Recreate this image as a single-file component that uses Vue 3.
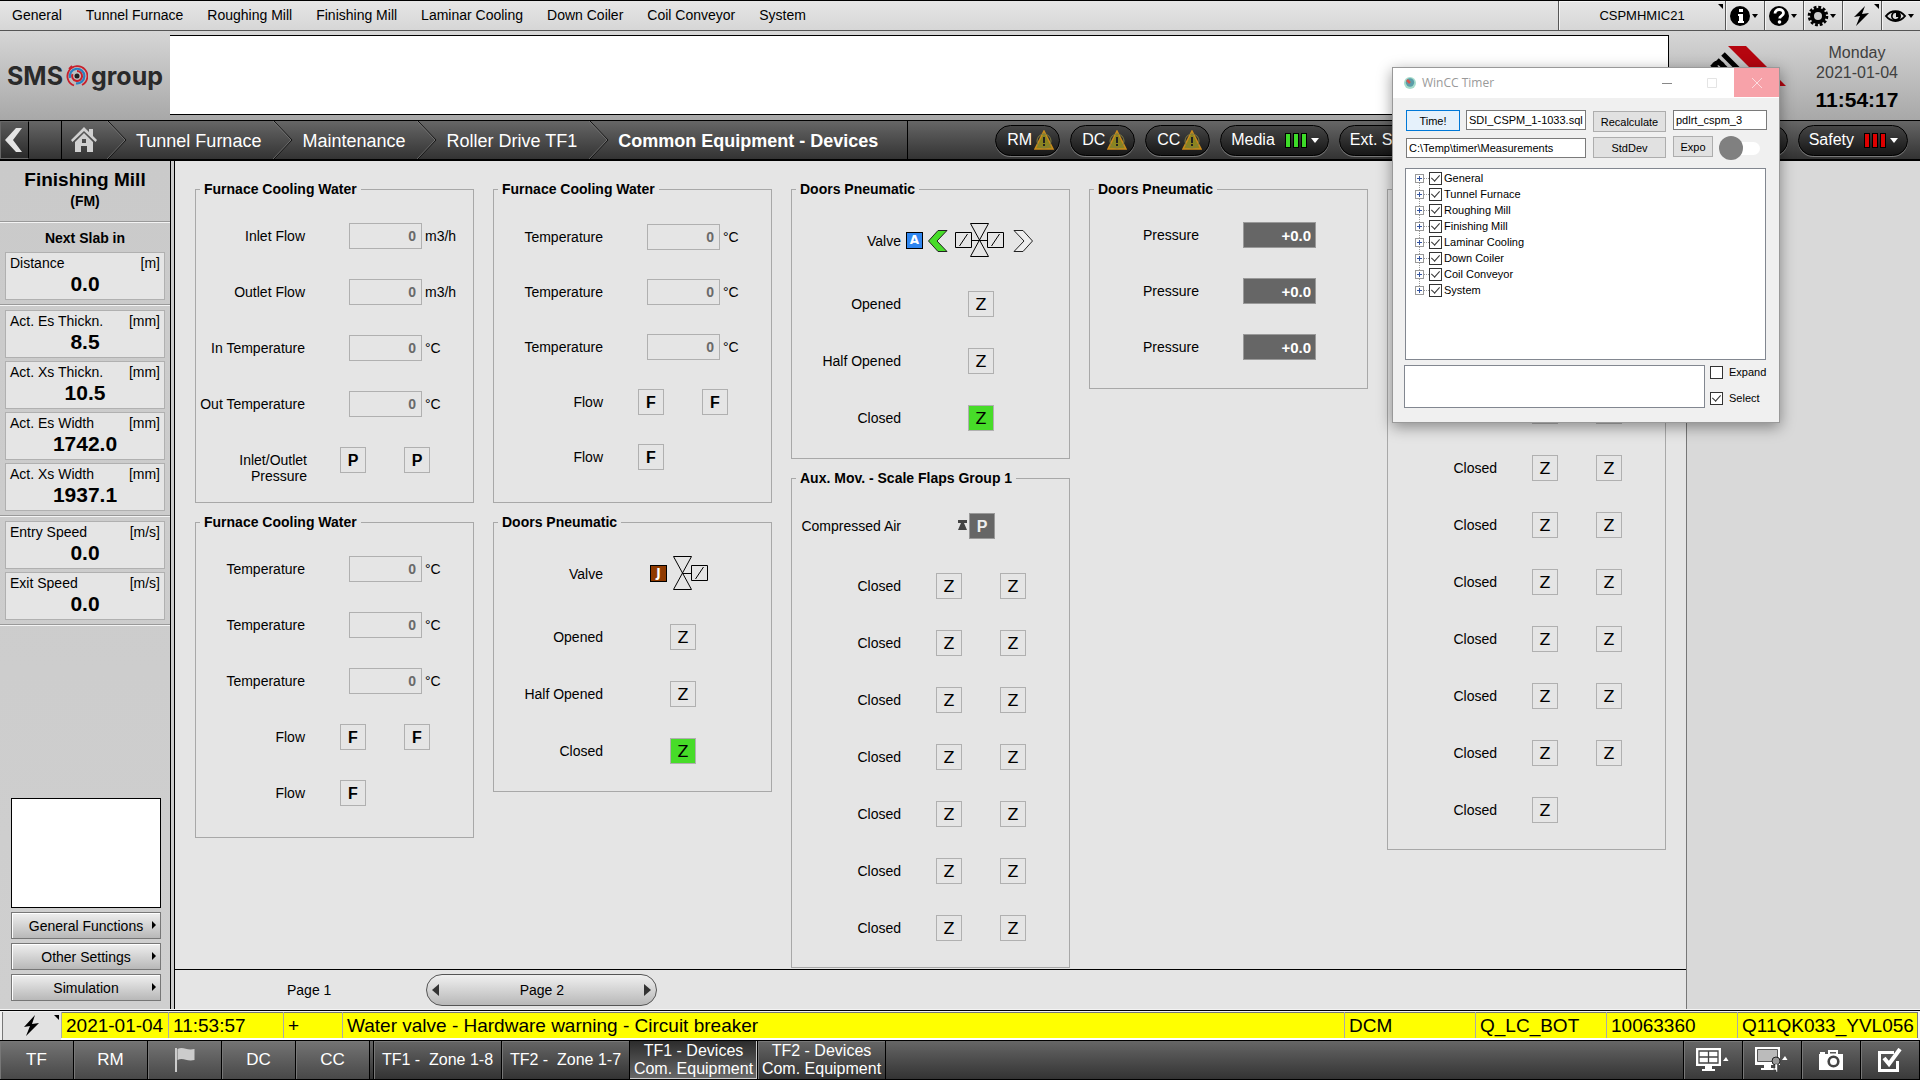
<script setup>
import { ref } from 'vue'

const menu = ['General', 'Tunnel Furnace', 'Roughing Mill', 'Finishing Mill', 'Laminar Cooling', 'Down Coiler', 'Coil Conveyor', 'System']
const crumbs = ['Tunnel Furnace', 'Maintenance', 'Roller Drive TF1']
const warnings = ['RM', 'DC', 'CC']

const metrics = [
  [{ label: 'Distance', unit: '[m]', value: '0.0' }],
  [
    { label: 'Act. Es Thickn.', unit: '[mm]', value: '8.5' },
    { label: 'Act. Xs Thickn.', unit: '[mm]', value: '10.5' },
    { label: 'Act. Es Width', unit: '[mm]', value: '1742.0' },
    { label: 'Act. Xs Width', unit: '[mm]', value: '1937.1' },
  ],
  [
    { label: 'Entry Speed', unit: '[m/s]', value: '0.0' },
    { label: 'Exit Speed', unit: '[m/s]', value: '0.0' },
  ],
]
const functions = ['General Functions', 'Other Settings', 'Simulation']

const field = (label, unit) => ({ kind: 'field', label, unit, value: '0' })
const lamps = (label, ...letters) => ({ kind: 'lamps', label, letters })
const lamp = (label, letter, tone = '') => ({ kind: 'lamp', label, letter, tone })
const flaps = (n) => Array.from({ length: n }, () => lamps('Closed', 'Z', 'Z'))

const columns = [
  [
    {
      title: 'Furnace Cooling Water', type: 'inlet',
      rows: [
        field('Inlet Flow', 'm3/h'), field('Outlet Flow', 'm3/h'),
        field('In Temperature', '°C'), field('Out Temperature', '°C'),
        lamps('Inlet/Outlet Pressure', 'P', 'P'),
      ],
    },
    {
      title: 'Furnace Cooling Water', type: 'return',
      rows: [
        field('Temperature', '°C'), field('Temperature', '°C'), field('Temperature', '°C'),
        lamps('Flow', 'F', 'F'), lamps('Flow', 'F'),
      ],
    },
  ],
  [
    {
      title: 'Furnace Cooling Water', type: 'compact',
      rows: [
        field('Temperature', '°C'), field('Temperature', '°C'), field('Temperature', '°C'),
        lamps('Flow', 'F', 'F'), lamps('Flow', 'F'),
      ],
    },
    {
      title: 'Doors Pneumatic', type: 'door',
      rows: [
        { kind: 'valve-single', label: 'Valve' },
        lamp('Opened', 'Z'), lamp('Half Opened', 'Z'), lamp('Closed', 'Z', 'on'),
      ],
    },
  ],
  [
    {
      title: 'Doors Pneumatic', type: 'door',
      rows: [
        { kind: 'valve-double', label: 'Valve' },
        lamp('Opened', 'Z'), lamp('Half Opened', 'Z'), lamp('Closed', 'Z', 'on'),
      ],
    },
    {
      title: 'Aux. Mov. - Scale Flaps Group 1', type: 'flaps',
      rows: [{ kind: 'air', label: 'Compressed Air' }, ...flaps(7)],
    },
  ],
  [
    {
      title: 'Doors Pneumatic', type: 'pressure',
      rows: ['+0.0', '+0.0', '+0.0'].map((value) => ({ kind: 'reading', label: 'Pressure', value })),
    },
  ],
  [{ title: '', type: 'long', rows: [...flaps(7), lamps('Closed', 'Z')] }],
]

const areas = ['TF', 'RM', 'flag', 'DC', 'CC']
const tree = ref(menu.map((name) => ({ name, checked: true })))
const expand = ref(false)
const select = ref(true)
</script>

<template>
  <div class="hmi">
    <header class="menubar">
      <nav class="menu">
        <a v-for="m in menu" :key="m" href="#">{{ m }}</a>
      </nav>
      <button class="station">CSPMHMIC21<i class="corner"></i></button>
      <button class="tool" aria-label="Information">
        <svg width="36" height="28" viewBox="0 0 36 28"><circle cx="14" cy="14" r="10" /><path d="M13 7h4v3h-4zM12 12h5v7h1v2h-6v-2h1v-5h-1z" fill="#fff" /><path d="M26 12h6l-3 4z" /></svg>
      </button>
      <button class="tool" aria-label="Help">
        <svg width="36" height="28" viewBox="0 0 36 28"><circle cx="14" cy="14" r="10" /><path d="M10 11.500c0-5.500 8.500-5 8.500-.5 0 3-3.800 2.800-3.800 5.500" fill="none" stroke="#fff" stroke-width="2.800" /><circle cx="14.500" cy="20" r="1.800" fill="#fff" /><path d="M26 12h6l-3 4z" /></svg>
      </button>
      <button class="tool" aria-label="Settings">
        <svg width="36" height="28" viewBox="0 0 36 28"><circle cx="14" cy="14" r="6" fill="#ccc" stroke="#000" stroke-width="4" /><circle cx="14" cy="14" r="8.800" fill="none" stroke="#000" stroke-width="3" stroke-dasharray="2.800 1.808" /><path d="M26 12h6l-3 4z" /></svg>
      </button>
      <button class="tool" aria-label="Alarms">
        <svg width="36" height="28" viewBox="0 0 36 28"><path d="M22 4L11 15l6-1-4 10 13-13-7 1z" /></svg><i class="corner"></i>
      </button>
      <button class="tool" aria-label="View">
        <svg width="36" height="28" viewBox="0 0 36 28"><path d="M4 14c5-6.500 14-6.500 19 0-5 6.500-14 6.500-19 0z" fill="none" stroke="#000" stroke-width="2" /><circle cx="14" cy="14" r="5" /><path d="M14 11a3 3 0 1 0 2.500 4h-2.500z" fill="#ddd" /><path d="M26 12h6l-3 4z" /></svg>
      </button>
    </header>

    <section class="banner">
      <div class="brand">
        <span>SMS</span>
        <svg width="22" height="24" viewBox="0 0 22 24" fill="none"><circle cx="11" cy="12" r="2.500" fill="#222" /><path d="M11 7a5 5 0 1 1-4.500 3" stroke="#c8202c" stroke-width="2" /><path d="M4 14a7.300 7.300 0 1 1 6 5.300" stroke="#2b7fc0" stroke-width="2.200" /><path d="M8 21.500A10 10 0 1 1 16 21M3 5l3-3" stroke="#c8202c" stroke-width="1.800" /></svg>
        <span>group</span>
      </div>
      <div class="message"></div>
      <svg class="plant" width="125" height="89" viewBox="0 0 125 89">
        <path d="M59 15h18l40 40H99z" fill="#b5050f" />
        <path d="M54 23l18 18M48 29l18 18M54 35q-4-6-9-1M43 33l14 14" fill="none" stroke="#000" stroke-width="5" />
      </svg>
      <div class="clock">
        <span>Monday</span>
        <span>2021-01-04</span>
        <strong>11:54:17</strong>
      </div>
    </section>

    <nav class="path">
      <button class="back" aria-label="Back">
        <svg width="26" height="36" viewBox="0 0 26 36"><path d="M15 6h6l-9 12 9 12h-6L4 18z" fill="#e4e4e4" /></svg>
      </button>
      <span class="spacer"></span>
      <a class="home" href="#" aria-label="Home">
        <svg width="26" height="26" viewBox="0 0 26 26" fill="#d0d0d0"><path d="M13 0l5 5V2h4v7l4 4-1.500 2L13 4 1.500 15 0 13z" /><path d="M13 6l9 9v10h-6v-6h-6v6H4V15zM11 12v4h4v-4z" fill-rule="evenodd" /></svg>
      </a>
      <template v-for="c in crumbs" :key="c">
        <svg class="sep" width="20" height="38" viewBox="0 0 20 38" fill="none"><path d="M1 0l18 19L1 38" stroke="#111" /><path d="M0 0l18 19L0 38" stroke="#888" stroke-opacity=".6" /></svg>
        <a href="#">{{ c }}</a>
      </template>
      <svg class="sep" width="20" height="38" viewBox="0 0 20 38" fill="none"><path d="M1 0l18 19L1 38" stroke="#111" /><path d="M0 0l18 19L0 38" stroke="#888" stroke-opacity=".6" /></svg>
      <a class="current" href="#">Common Equipment - Devices</a>
      <div class="pills">
        <button v-for="w in warnings" :key="w" class="pill warn">
          {{ w }}
          <svg width="20" height="20" viewBox="0 0 20 20"><path d="M10 1l9 18H1z" fill="#8a8420" stroke="#c98a1c" stroke-width="1.500" /><circle cx="10" cy="11" r="7" fill="none" stroke="#807c40" /><path d="M9 7h2v6H9zM9 14h2v2H9z" fill="#222" /></svg>
        </button>
        <button class="pill">Media <span class="bars ok"><i></i><i></i><i></i></span><b class="down"></b></button>
        <button class="pill wide">Ext. Systems</button>
        <button class="pill">Safety <span class="bars bad"><i></i><i></i><i></i></span><b class="down"></b></button>
      </div>
    </nav>

    <div class="body">
      <aside class="side">
        <div class="side-title">
          <h1>Finishing Mill</h1>
          <p>(FM)</p>
        </div>
        <h2>Next Slab in</h2>
        <div v-for="(set, i) in metrics" :key="i" class="set">
          <div v-for="m in set" :key="m.label" class="metric">
            <div class="metric-head"><span>{{ m.label }}</span><span>{{ m.unit }}</span></div>
            <strong>{{ m.value }}</strong>
          </div>
        </div>
        <div class="side-foot">
          <div class="preview"></div>
          <button v-for="f in functions" :key="f" class="func">{{ f }}<i></i></button>
        </div>
      </aside>
      <div class="rail"></div>

      <main class="content">
        <div class="columns">
          <div v-for="(col, ci) in columns" :key="ci" class="column">
            <fieldset v-for="(g, gi) in col" :key="gi" class="group" :class="'group-' + g.type">
              <legend>{{ g.title }}</legend>
              <div v-for="(r, ri) in g.rows" :key="ri" class="row">
                <template v-if="r.kind === 'field' || r.kind === 'reading'">
                  <label class="name" :for="`f${ci}${gi}${ri}`">{{ r.label }}</label>
                  <input :id="`f${ci}${gi}${ri}`" class="value" :class="r.kind" :value="r.value" readonly />
                  <span class="unit">{{ r.unit }}</span>
                </template>
                <template v-else-if="r.kind === 'lamps'">
                  <span class="name" :class="{ double: r.label.includes('/') }">{{ r.label }}</span>
                  <div class="pair"><span v-for="(l, li) in r.letters" :key="li" class="lamp" :class="{ z: l === 'Z' }">{{ l }}</span></div>
                </template>
                <template v-else-if="r.kind === 'lamp'">
                  <span class="name">{{ r.label }}</span>
                  <span class="lamp z single" :class="r.tone">{{ r.letter }}</span>
                </template>
                <template v-else-if="r.kind === 'air'">
                  <span class="name">{{ r.label }}</span>
                  <svg class="limit" width="9" height="11" viewBox="0 0 9 11"><path d="M0 0h9v3H6l3 7H0l3-7H0z" fill="#444" /></svg>
                  <span class="lamp dark">P</span>
                </template>
                <template v-else-if="r.kind === 'valve-double'">
                  <span class="name">{{ r.label }}</span>
                  <span class="badge auto">A</span>
                  <svg class="chev" width="20" height="22" viewBox="0 0 20 22"><path d="M10 .5h9L9 11l10 10.500h-9L.5 11z" fill="#47dc29" stroke="#222" /></svg>
                  <svg class="valve" width="50" height="35" viewBox="0 0 50 35" fill="none" stroke="#000"><path d="M.5 9.500h16v15H.5zM32.500 9.500h16v15h-16zM16 17.500h17M15.500.5h18l-18 33h18zM4.500 23l8-12M36.500 23l8-12" /></svg>
                  <svg class="chev" width="20" height="22" viewBox="0 0 20 22"><path d="M10 .5H1L11 11 1 21.500h9L19.500 11z" fill="#eee" stroke="#222" /></svg>
                </template>
                <template v-else>
                  <span class="name">{{ r.label }}</span>
                  <span class="badge jog">J</span>
                  <svg class="valve-s" width="36" height="35" viewBox="0 0 36 35" fill="none" stroke="#000"><path d="M18.500 9.500h16v15h-16zM10 17.500h8M.5.5h18L.5 33.500h18zM22.500 23l8-12" /></svg>
                </template>
              </div>
            </fieldset>
          </div>
        </div>
        <footer class="pager">
          <a href="#">Page 1</a>
          <button class="page"><i class="left"></i>Page 2<i class="right"></i></button>
        </footer>
      </main>
      <div class="blank"></div>
    </div>

    <section class="alarm">
      <button class="ack" aria-label="Alarm list">
        <svg width="20" height="22" viewBox="0 0 20 22"><path d="M13 0L2 12l6-1-4 10L17 8l-7 1z" /></svg><i class="corner"></i>
      </button>
      <table>
        <colgroup><col class="c-date" /><col class="c-time" /><col class="c-state" /><col /><col class="c-tag" /><col class="c-tag" /><col class="c-tag" /><col class="c-last" /></colgroup>
        <tbody>
          <tr><td>2021-01-04</td><td>11:53:57</td><td>+</td><td>Water valve - Hardware warning - Circuit breaker</td><td>DCM</td><td>Q_LC_BOT</td><td>10063360</td><td>Q11QK033_YVL056</td></tr>
        </tbody>
      </table>
    </section>

    <nav class="dock">
      <button v-for="a in areas" :key="a" class="area" :aria-label="a">
        <svg v-if="a === 'flag'" width="22" height="26" viewBox="0 0 22 26" fill="#ccc"><path d="M1 1h2v24H1zM3.500 2c6-3 9 2 17 0v11c-8 2-11-3-17 0z" /></svg>
        <template v-else>{{ a }}</template>
      </button>
      <span class="gap"></span>
      <button class="view">TF1 -&nbsp; Zone 1-8</button>
      <button class="view">TF2 -&nbsp; Zone 1-7</button>
      <button class="view active">TF1 - Devices<br />Com. Equipment</button>
      <button class="view">TF2 - Devices<br />Com. Equipment</button>
      <span class="fill"></span>
      <button class="util" aria-label="Screens">
        <svg width="34" height="24" viewBox="0 0 34 24" fill="#fff"><path d="M0 0h25v18H0z" /><path d="M3 3h19v12H3zM12.500 3v12M3 9h19" fill="none" stroke="#444" stroke-width="1.300" /><path d="M9 18h7v3h3v2H6v-2h3zM27 13l3-4 2.500 4z" /></svg>
      </button>
      <button class="util" aria-label="Screen access">
        <svg width="34" height="26" viewBox="0 0 34 26" fill="#fff"><path d="M0 0h25v18H0z" /><path d="M2.500 2.500h20v12h-20z" fill="#bbb" stroke="#555" /><path d="M9 18h7v3h3v2H6v-2h3zM27 13l3-4 2.500 4z" /><circle cx="21" cy="14" r="4" fill="#999" stroke="#222" /><path d="M20 17h2.500v8H21v-2h-2v-2h1z" stroke="#333" stroke-width=".5" /></svg>
      </button>
      <button class="util" aria-label="Snapshot">
        <svg width="24" height="20" viewBox="0 0 24 20" fill="#fff"><path d="M0 4h1V2h5v2h3V0h10v4h5v16H0zM11 2v1.500h6V2z" fill-rule="evenodd" /><circle cx="14.500" cy="11.500" r="4.800" stroke="#444" stroke-width="2.600" /></svg>
      </button>
      <button class="util" aria-label="Acknowledge">
        <svg width="24" height="24" viewBox="0 0 24 24" fill="none" stroke="#fff"><path d="M16 4.500H1.500v18h18V13" stroke-width="3" /><path d="M6 10l5 6L22 1" stroke-width="4" /></svg>
      </button>
    </nav>

    <section class="dialog" role="dialog" aria-label="WinCC Timer">
      <div class="titlebar">
        <svg width="14" height="14" viewBox="0 0 14 14"><circle cx="7" cy="7" r="6" fill="#a5dccb" /><circle cx="7" cy="6.500" r="4.200" fill="#5b9da8" /><path d="M4 4l3 3" stroke="#d8564c" stroke-width="2.500" /></svg>
        <span>WinCC Timer</span>
        <button aria-label="Minimize"><svg width="12" height="12" viewBox="0 0 12 12"><path d="M1 6.500h10" stroke="#888" /></svg></button>
        <button aria-label="Maximize"><svg width="12" height="12" viewBox="0 0 12 12"><path d="M1.500 1.500h9v9h-9z" fill="none" stroke="#e4e4e4" /></svg></button>
        <button class="close" aria-label="Close"><svg width="12" height="12" viewBox="0 0 12 12"><path d="M1 1l10 10M11 1L1 11" stroke="#fbdcdf" /></svg></button>
      </div>
      <div class="form">
        <div class="form-left">
          <div class="line">
            <button class="btn primary">Time!</button>
            <input class="text" value="SDI_CSPM_1-1033.sql" aria-label="Script file" />
          </div>
          <input class="text" value="C:\Temp\timer\Measurements" aria-label="Output folder" />
        </div>
        <div class="form-mid">
          <button class="btn">Recalculate</button>
          <button class="btn">StdDev</button>
        </div>
        <div class="form-right">
          <input class="text" value="pdlrt_cspm_3" aria-label="Database" />
          <div class="line">
            <button class="btn expo">Expo</button>
            <input class="switch" type="checkbox" aria-label="Enable" />
          </div>
        </div>
      </div>
      <ul class="tree">
        <li v-for="t in tree" :key="t.name">
          <button class="plus" :aria-label="'Expand ' + t.name"></button>
          <label><input v-model="t.checked" type="checkbox" class="check" />{{ t.name }}</label>
        </li>
      </ul>
      <div class="bottom">
        <textarea aria-label="Log" readonly></textarea>
        <div class="options">
          <label><input v-model="expand" type="checkbox" class="check" />Expand</label>
          <label><input v-model="select" type="checkbox" class="check" />Select</label>
        </div>
      </div>
    </section>
  </div>
</template>

<style>
body { margin: 0; }
</style>

<style scoped>
.hmi { position: relative; display: flex; flex-direction: column; min-height: 100vh; background: #ccc; color: #000; font: 14px/16px "Liberation Sans", sans-serif; overflow: hidden; }
.hmi *, .hmi *::before, .hmi *::after { box-sizing: border-box; }
a { color: inherit; text-decoration: none; white-space: nowrap; }
button { margin: 0; padding: 0; border: 0; background: none; font: inherit; color: inherit; white-space: nowrap; }
input { font: inherit; }
svg { display: block; flex: none; }
h1, h2, p, ul { margin: 0; padding: 0; list-style: none; }

.menubar { display: flex; height: 31px; border-top: 1px solid #000; border-bottom: 1px solid #555; background: linear-gradient(#e6e6e6, #d6d6d6); }
.menu { flex: 1; display: flex; align-items: center; gap: 24px; padding: 0 0 2px 12px; }
.station { position: relative; width: 167px; border-left: 1px solid #555; font-size: 13px; box-shadow: inset 1px 1px #f4f4f4; }
.tool { position: relative; width: 39px; border-left: 1px solid #555; box-shadow: inset 1px 1px #f4f4f4; }
.corner { position: absolute; top: 3px; right: 2px; border-top: 5px solid #000; border-left: 5px solid transparent; }

.banner { display: flex; height: 89px; background: linear-gradient(#d6d6d6, #a8a8a8); }
.brand { display: flex; align-items: center; justify-content: center; gap: 3px; width: 170px; color: #2a2a2a; font: 700 25px/28px Inter, sans-serif; }
.message { flex: 1; margin: 4px 0 5px; background: #fff; border: 1px solid #000; border-left: 0; }
.clock { display: flex; flex-direction: column; align-items: center; width: 126px; padding-top: 12px; color: #404040; font-size: 16px; line-height: 20px; }
.clock strong { margin-top: 5px; color: #000; font-size: 21px; line-height: 24px; }

.path { display: flex; align-items: center; height: 41px; border-top: 1px solid #000; border-bottom: 2px solid #000; background: linear-gradient(#666, #333); color: #fff; font-size: 18px; }
.path > a { padding: 2px 12px 0 9px; }
.back { width: 29px; height: 38px; border: 1px solid #666; border-right-color: #000; background: linear-gradient(#5a5a5a, #2a2a2a); }
.spacer { width: 33px; height: 38px; border-right: 1px solid #000; }
.path > .home { padding: 0 10px 0 9px; }
.path > .current { display: flex; align-items: center; height: 38px; padding-right: 29px; border-right: 1px solid #000; font-weight: 700; }
.pills { flex: 1; display: flex; align-items: center; gap: 10px; padding: 0 12px 0 87px; font-size: 16px; }
.pill { display: flex; align-items: center; height: 31px; padding: 0 9px 0 10px; border: 1px solid #000; border-radius: 16px; background: linear-gradient(#454545, #161616); box-shadow: 0 1px #777; }
.warn { width: 65px; padding: 0 5px 0 11px; gap: 2px; }
.wide { flex: 1; }
.bars { display: flex; gap: 2px; margin: 0 4px 0 10px; }
.bars i { width: 6px; height: 15px; border: 1px solid #000; }
.ok i { background: #3ddc28; }
.bad i { background: #e00000; }
.down { border: 4px solid transparent; border-top: 5px solid #fff; border-bottom: 0; }

.body { flex: 1; display: flex; }
.side { display: flex; flex-direction: column; width: 170px; text-align: center; background: linear-gradient(#cacaca, #cfcfcf); }
.side-title { height: 61px; padding-top: 8px; border-bottom: 1px solid #999; font-weight: 700; }
.side-title h1 { font-size: 19px; line-height: 22px; }
.side-title p { line-height: 20px; }
.side h2 { padding: 7px 0 6px; border-top: 1px solid #f4f4f4; font-size: 14px; line-height: 16px; }
.set { display: flex; flex-direction: column; gap: 3px; padding: 0 5px 4px; border-bottom: 1px solid #999; box-shadow: 0 1px #f4f4f4; }
.set + .set { padding-top: 5px; }
.metric { height: 48px; padding: 2px 4px 0; border: 1px solid #b0b0b0; background: #e5e5e5; }
.metric-head { display: flex; justify-content: space-between; }
.metric strong { display: block; font-size: 21px; line-height: 26px; }
.side-foot { display: flex; flex-direction: column; gap: 4px; margin-top: auto; padding: 0 9px 8px 11px; }
.preview { height: 110px; border: 1px solid #000; background: #fff; }
.func { position: relative; height: 27px; border: 1px solid #777; background: linear-gradient(#efefef, #b8b8b8); box-shadow: inset 1px 1px #fff; }
.func i { position: absolute; top: 8px; right: 4px; border: 4px solid transparent; border-left-color: #000; border-right: 0; }
.rail { width: 5px; border: 1px solid #000; border-width: 0 1px; background: #ccc; }

.content { flex: 1; display: flex; flex-direction: column; background: #e5e5e5; }
.columns { flex: 1; display: grid; grid-template-columns: repeat(5, 1fr); align-items: start; gap: 19px; padding: 20px 20px 0; }
.column { display: flex; flex-direction: column; gap: 11px; min-width: 0; }
.group { min-width: 0; margin: 0; padding: 12px 0 14px; border: 1px solid #a8a8a8; }
.group legend { min-height: 16px; margin-left: 4px; padding: 0 4px; font-weight: 700; white-space: nowrap; }
.row { display: flex; align-items: center; height: 56px; }
.group-inlet { padding-top: 11px; }
.group-return { padding: 11px 0 16px; }
.group-compact { padding: 12px 0 18px; }
.group-compact .row { height: 55px; }
.group-door .row, .group-flaps .row, .group-long .row { height: 57px; }
.group-door { padding: 15px 0 12px; }
.group-door .row:first-of-type { margin-bottom: 6px; }
.group-flaps { padding: 11px 0 11px; }
.group-flaps .row:first-of-type { margin-bottom: 3px; }
.group-pressure { padding: 10px 0 13px; }
.group-long { padding: 185px 0 11px; }
.name { width: 109px; text-align: right; white-space: nowrap; }
.name.double { width: 111px; padding-top: 16px; padding-left: 30px; white-space: normal; }
.value { width: 73px; height: 26px; margin: 0 3px 0 44px; padding: 0 5px; border: 1px solid #b0b0b0; border-radius: 0; background: #e5e5e5; color: #6a6a6a; font-weight: 700; text-align: right; }
.value.reading { padding-right: 4px; background: #666; border-color: #999; color: #fff; font-size: 15px; }
.lamp { width: 26px; height: 26px; border: 1px solid #b0b0b0; font: 700 16px/26px "Liberation Sans", sans-serif; text-align: center; }
.lamp.z { font: 400 16px/26px "DejaVu Sans", sans-serif; }
.lamp.on { background: #47dc29; }
.lamp.dark { background: #666; border-color: #999; color: #eee; }
.single { margin-left: 67px; }
.pair { display: flex; gap: 38px; margin-left: 35px; }
.double + .pair { margin-left: 33px; }
.limit { margin: 0 2px 0 57px; }
.badge { width: 17px; height: 17px; border: 1px solid #000; color: #fff; font: 700 12px/15px "DejaVu Sans", sans-serif; text-align: center; }
.auto { margin: 0 5px; background: #2f86f0; }
.jog { margin: 0 6px 0 47px; background: #8f3a00; }
.valve { margin: 0 8px 0 7px; }
.pager { display: flex; align-items: center; height: 40px; border-top: 1px solid #000; padding-left: 112px; }
.page { display: flex; align-items: center; justify-content: space-between; width: 231px; height: 32px; margin-left: 95px; padding: 0 5px; border: 1px solid #555; border-radius: 16px; background: linear-gradient(#f0f0f0, #b8b8b8); }
.page i { border: 6px solid transparent; }
.page .left { border-right: 7px solid #333; border-left: 0; }
.page .right { border-left: 7px solid #333; border-right: 0; }
.blank { width: 234px; border-left: 1px solid #777; background: #d9d9d9; }

.alarm { display: flex; height: 31px; border-top: 1px solid #f4f4f4; background: #f0f0f0; box-shadow: inset 0 1px #000; }
.ack { position: relative; display: grid; place-items: center; width: 59px; margin: 2px 0 0 2px; border-left: 1px solid #777; background: #e2e2e2; }
.alarm table { flex: 1; width: 0; height: 28px; margin: 2px 2px 0 0; border: 1px solid #777; border-collapse: collapse; table-layout: fixed; background: #fff; }
.alarm td { height: 24px; padding: 0 0 0 4px; border-left: 1px solid #aaa; border-bottom: 2px solid #fff; background: #ff0; font-size: 19px; line-height: 24px; white-space: nowrap; overflow: hidden; }
.c-date { width: 107px; }
.c-time { width: 115px; }
.c-state { width: 59px; }
.c-tag { width: 131px; }
.c-last { width: 180px; }

.dock { display: flex; height: 40px; border-top: 1px solid #000; border-bottom: 1px solid #000; background: linear-gradient(#666, #333); color: #fff; }
.dock button { display: flex; align-items: center; justify-content: center; border-right: 1px solid #000; box-shadow: inset 1px 1px #777; }
.dock .area { width: 74px; background: linear-gradient(#747474, #484848); font-size: 17px; }
.gap { width: 4px; border-right: 1px solid #000; }
.dock .view { width: 128px; font-size: 16px; line-height: 18px; }
.dock .active { background: linear-gradient(#2c2c2c, #6a6a6a); box-shadow: inset -1px -1px #ccc; }
.fill { flex: 1; border-right: 1px solid #000; }
.dock .util { width: 59px; background: linear-gradient(#666, #3a3a3a); }

.dialog { position: absolute; top: 67px; right: 140px; width: 388px; height: 356px; border: 1px solid #999; background: #f0f0f0; font-size: 11px; line-height: 14px; box-shadow: 0 4px 14px rgba(0, 0, 0, .4); }
.titlebar { display: flex; align-items: center; height: 30px; padding-left: 10px; background: #fff; color: #999; }
.titlebar span { flex: 1; margin-left: 5px; font: 12px/16px "Open Sans", sans-serif; }
.titlebar button { display: grid; place-items: center; width: 45px; height: 29px; align-self: start; }
.titlebar .close { background: #f7a2a9; }
.form { display: flex; gap: 7px; padding: 12px 12px 0 13px; height: 70px; }
.form-left, .form-mid, .form-right { display: flex; flex-direction: column; gap: 6px; }
.form-left { width: 180px; gap: 8px; }
.form-mid { width: 73px; padding-top: 1px; gap: 5px; }
.form-right { flex: 1; }
.line { display: flex; gap: 6px; }
.form-mid .btn { width: 73px; }
.btn { width: 54px; height: 21px; flex: none; border: 1px solid #adadad; background: #e1e1e1; }
.primary { border-color: #0078d7; background: #e5f1fb; }
.expo { width: 40px; }
.text { flex: none; width: 100%; height: 20px; padding: 0 2px; border: 1px solid #7a7a7a; border-radius: 0; background: #fff; color: #000; }
.line .text { flex: 1; width: 0; }
.form-left > .text { margin-top: -1px; }
.switch { position: relative; appearance: none; width: 41px; height: 13px; margin: 6px 0 0; border-radius: 7px; background: #fff; }
.switch::before { content: ""; position: absolute; left: 0; top: -6px; width: 24px; height: 24px; border-radius: 12px; background: #808080; }
.tree { height: 192px; margin: 0 13px 0 12px; padding: 1px 9px; border: 1px solid #828790; background: #fff; }
.tree li { position: relative; display: flex; align-items: center; height: 16px; }
.tree li::before { content: ""; position: absolute; left: 4px; top: 8px; width: 10px; height: 16px; border: 1px dotted #999; border-width: 1px 0 0 1px; }
.tree li:last-child::before { height: 1px; }
.plus { position: relative; width: 9px; height: 9px; margin-right: 5px; border: 1px solid #999; background: #fff; }
.plus::before, .plus::after { content: ""; position: absolute; background: #3353a0; }
.plus::before { left: 1px; top: 3px; width: 5px; height: 1px; }
.plus::after { left: 3px; top: 1px; width: 1px; height: 5px; }
.tree label { display: flex; align-items: center; gap: 2px; }
.check { position: relative; appearance: none; flex: none; width: 13px; height: 13px; margin: 0; border: 1px solid #333; background: #fff; }
.check:checked::after { content: ""; position: absolute; left: 3px; top: 0; width: 5px; height: 8px; border: solid #333; border-width: 0 1px 1px 0; transform: rotate(42deg); }
.bottom { display: flex; gap: 5px; padding: 5px 0 0 11px; }
.bottom textarea { width: 301px; height: 43px; margin: 0; padding: 0; border: 1px solid #828790; background: #fff; resize: none; }
.options { display: flex; flex-direction: column; gap: 12px; }
.options label { display: flex; align-items: center; gap: 6px; }
</style>
